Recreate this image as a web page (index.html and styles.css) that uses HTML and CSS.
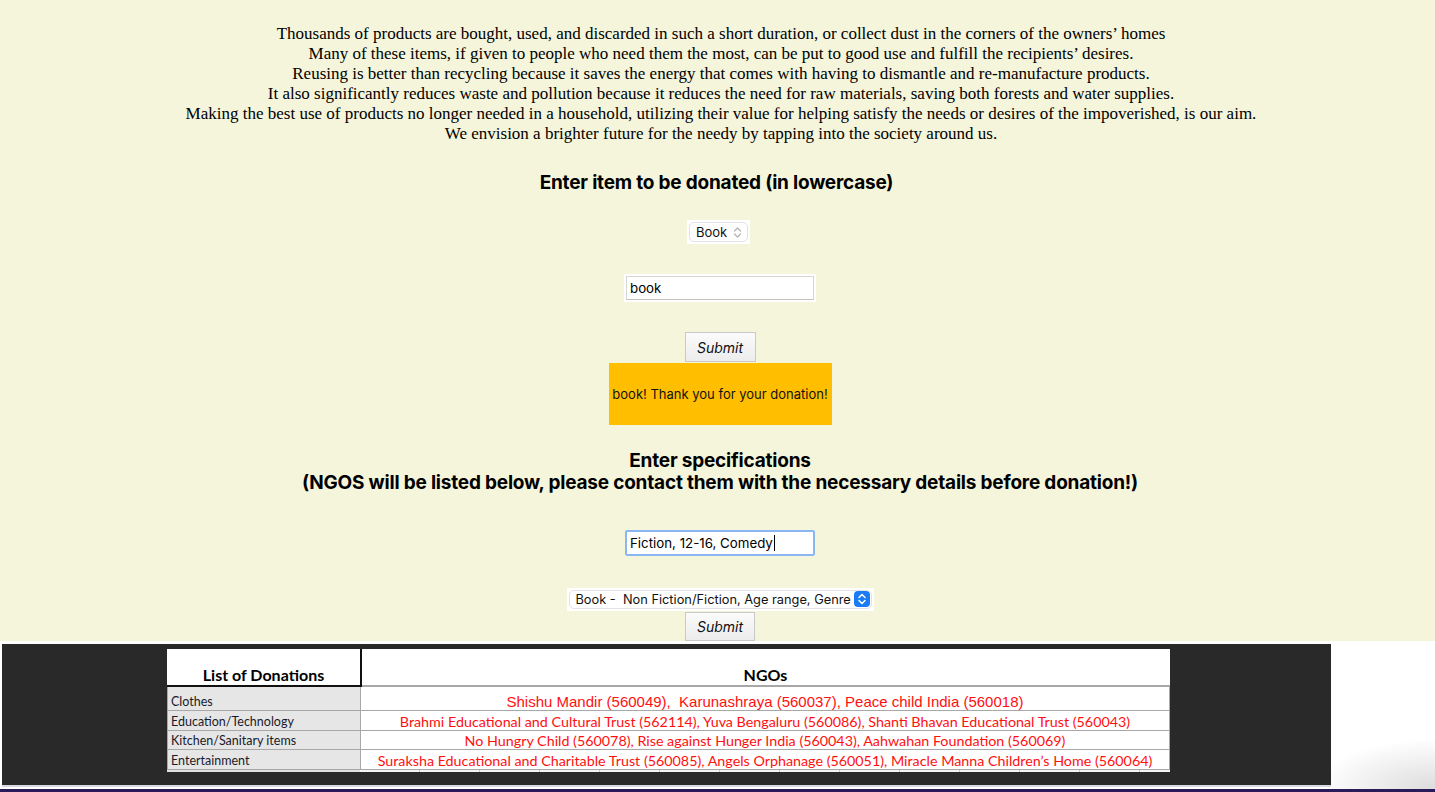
FILE: index.html
```html
<!DOCTYPE html>
<html lang="en">
<head>
<meta charset="utf-8">
<title>Donate</title>
<link rel="stylesheet" href="styles.css">
</head>
<body>
<main class="page">
  <p class="intro">Thousands of products are bought, used, and discarded in such a short duration, or collect dust in the corners of the owners’ homes<br>
  Many of these items, if given to people who need them the most, can be put to good use and fulfill the recipients’ desires.<br>
  Reusing is better than recycling because it saves the energy that comes with having to dismantle and re-manufacture products.<br>
  It also significantly reduces waste and pollution because it reduces the need for raw materials, saving both forests and water supplies.<br>
  Making the best use of products no longer needed in a household, utilizing their value for helping satisfy the needs or desires of the impoverished, is our aim.<br>
  We envision a brighter future for the needy by tapping into the society around us.</p>

  <h2 class="heading h-item">Enter item to be donated (in lowercase)</h2>

  <div class="sel-wrap sel-small">
    <select class="sel"><option>Book</option></select>
    <svg class="chev-grey" width="9" height="13" viewBox="0 0 9 13"><path d="M1.5 5 L4.5 2 L7.5 5 M1.5 8 L4.5 11 L7.5 8" fill="none" stroke="#b4b4b4" stroke-width="1.3" stroke-linecap="round" stroke-linejoin="round"/></svg>
  </div>

  <div class="field-wrap f-item"><input class="field" type="text" value="book"></div>

  <button class="btn b-first" type="button">Submit</button>

  <div class="notice">book! Thank you for your donation!</div>

  <h2 class="heading h-spec">Enter specifications<br>(NGOS will be listed below, please contact them with the necessary details before donation!)</h2>

  <div class="field-wrap f-spec"><input class="field focused" type="text" value="Fiction, 12-16, Comedy"><span class="caret"></span></div>

  <div class="sel-wrap sel-wide">
    <select class="sel"><option>Book -&nbsp; Non Fiction/Fiction, Age range, Genre</option></select>
    <svg class="chev-blue" width="16" height="16" viewBox="0 0 16 16"><rect x="0" y="0" width="16" height="16" rx="4" fill="#1a7cf5"/><path d="M5 6.5 L8 3.5 L11 6.5 M5 9.5 L8 12.5 L11 9.5" fill="none" stroke="#fff" stroke-width="1.5" stroke-linecap="round" stroke-linejoin="round"/></svg>
  </div>

  <button class="btn b-second" type="button">Submit</button>
</main>

<footer class="foot">
  <div class="shot">
    <table class="ngo">
      <thead>
        <tr><th class="c-left">List of Donations</th><th class="c-right">NGOs</th></tr>
      </thead>
      <tbody>
        <tr class="r1"><td class="lab">Clothes</td><td class="org org-arial">Shishu Mandir (560049),&nbsp; Karunashraya (560037), Peace child India (560018)</td></tr>
        <tr class="r2"><td class="lab">Education/Technology</td><td class="org">Brahmi Educational and Cultural Trust (562114), Yuva Bengaluru (560086), Shanti Bhavan Educational Trust (560043)</td></tr>
        <tr class="r3"><td class="lab">Kitchen/Sanitary items</td><td class="org">No Hungry Child (560078), Rise against Hunger India (560043), Aahwahan Foundation (560069)</td></tr>
        <tr class="r4"><td class="lab">Entertainment</td><td class="org">Suraksha Educational and Charitable Trust (560085), Angels Orphanage (560051), Miracle Manna Children’s Home (560064)</td></tr>
      </tbody>
    </table>
    <div class="stub"></div>
  </div>
  <div class="blank"></div>
</footer>
</body>
</html>
```
FILE: styles.css
```css
* { box-sizing: border-box; }
html, body { margin: 0; padding: 0; background: #ffffff; }
body { width: 1435px; height: 792px; overflow: hidden; position: relative; }

.page {
  background: #f5f5dc;
  height: 641px;
  padding: 24px 0 0 5px;
  display: flex;
  flex-direction: column;
  align-items: center;
}

.intro {
  margin: 0;
  padding-left: 2px;
  font-family: "Liberation Serif", "Times New Roman", serif;
  font-size: 17px;
  line-height: 20px;
  text-align: center;
  color: #000;
}

.heading {
  margin: 0;
  font-family: Inter, "Noto Sans", sans-serif;
  font-weight: 700;
  font-size: 19px;
  line-height: 22px;
  text-align: center;
  color: #000;
  letter-spacing: -0.2px;
}
.h-item { margin-top: 28px; padding-right: 7px; }
.h-spec { margin-top: 25px; }

.sel-wrap {
  position: relative;
  background: #ffffff;
  display: flex;
  align-items: center;
}
.sel {
  appearance: none;
  -webkit-appearance: none;
  border: 1px solid #e2e2e2;
  border-radius: 5px;
  background: #ffffff;
  font-family: Inter, "Noto Sans", sans-serif;
  font-size: 13px;
  color: #111;
  margin: 2px;
  outline: none;
}
.sel-small { margin-top: 26px; margin-right: 3px; width: 63px; height: 24px; }
.sel-small .sel { width: 59px; height: 20px; padding: 0 0 0 6px; }
.chev-grey { position: absolute; right: 8px; top: 6px; }

.sel-wide { margin-top: 32px; width: 307px; height: 23px; }
.sel-wide .sel { width: 303px; height: 19px; padding: 0 0 0 6px; font-size: 12.8px; }
.chev-blue { position: absolute; right: 4px; top: 3px; }

.field-wrap {
  position: relative;
  background: #ffffff;
  width: 192px;
  height: 28px;
  padding: 2px;
}
.field {
  width: 100%;
  height: 100%;
  border: 1px solid #d6d6d6;
  border-bottom-color: #c4c4c4;
  background: #fff;
  font-family: Inter, "Noto Sans", sans-serif;
  font-size: 13.3px;
  color: #000;
  padding: 0 0 0 3px;
  outline: none;
}
.f-item { margin-top: 30px; }
.f-spec { margin-top: 36px; width: 190px; height: 26px; padding: 0; }
.field.focused { border: 2px solid #8ab7f2; border-radius: 2px; padding-left: 3px; }
.caret {
  position: absolute;
  left: 149px;
  top: 5px;
  width: 1px;
  height: 16px;
  background: #000;
}

.btn {
  width: 71px;
  height: 30px;
  border: 1px solid #c9c9c9;
  background: linear-gradient(#fbfbfb, #ececec);
  font-family: Inter, "Noto Sans", sans-serif;
  font-style: italic;
  font-size: 14px;
  color: #111;
  padding: 0;
}
.b-first { margin-top: 30px; }
.b-second { margin-top: 1px; width: 70px; height: 29px; }

.notice {
  margin-top: 1px;
  width: 223px;
  height: 62px;
  background: #ffbf00;
  display: flex;
  align-items: center;
  justify-content: center;
  font-family: Inter, "Noto Sans", sans-serif;
  font-size: 13px;
  color: #111;
}

.foot {
  margin-top: 3px;
  height: 148px;
  display: flex;
  background: #ffffff;
  border-bottom: 3px solid #2a1a5a;
}
.shot {
  margin-left: 2px;
  width: 1329px;
  height: 143px;
  background: #292929;
  padding: 5px 0 0 165px;
  border-bottom: 2px solid #d8d8e0;
}
.stub {
  width: 1003px;
  height: 2px;
  background: repeating-linear-gradient(90deg, #f4f4f4 0, #f4f4f4 59px, #c8c8c8 59px, #c8c8c8 60px);
  border-left: 193px solid #e0e0e0;
}
.blank {
  flex: 1;
  background: radial-gradient(ellipse 120px 50px at 100% 100%, #dcdcdc, #ffffff 100%);
}

.ngo {
  border-collapse: collapse;
  width: 1003px;
  background: #ffffff;
  table-layout: fixed;
}
.ngo th {
  height: 37px;
  font-family: Lato, "Open Sans", sans-serif;
  font-weight: 700;
  font-size: 16px;
  color: #000;
  vertical-align: bottom;
  padding: 0 0 1px 0;
  text-align: center;
}
.c-left { width: 193px; border-right: 2px solid #111; border-bottom: 2px solid #111; }
.c-right { border-bottom: 2px solid #a8a8a8; }

.ngo td {
  padding: 0 3px;
  font-family: Lato, "Open Sans", sans-serif;
  font-size: 14.3px;
  line-height: 16px;
  border: 1px solid #a8a8a8;
  white-space: nowrap;
  overflow: hidden;
}
.ngo td.lab { background: #e6e6e6; color: #1a1a2a; font-size: 12.5px; text-align: left; vertical-align: bottom; }
.org { color: #ff1010; text-align: center; vertical-align: bottom; }
.ngo td.org-arial { font-family: "Liberation Sans", Arial, sans-serif; font-size: 15px; }
.r1 td { height: 24px; }
.r2 td { height: 20px; }
.r3 td { height: 19px; }
.r4 td { height: 20px; }
```
